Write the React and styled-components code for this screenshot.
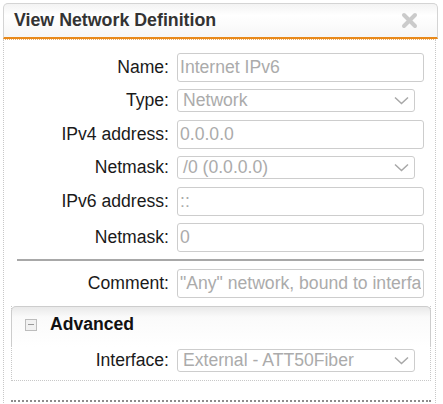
import React from 'react'
import styled, { createGlobalStyle } from 'styled-components'

const GlobalStyle = createGlobalStyle`
  body {
    margin: 0;
    background: #fff;
    font-family: "Liberation Sans", Arial, sans-serif;
  }
`

const Chevron = () => (
  <svg width="15" height="9" viewBox="0 0 15 9">
    <polyline points="1,1.5 7.5,7.5 14,1.5" fill="none" stroke="#a8a8a8" strokeWidth="1.5" />
  </svg>
)

const CloseIcon = () => (
  <svg width="17" height="17" viewBox="0 0 17 17">
    <g stroke="#cbcbcb" strokeWidth="4" strokeLinecap="round">
      <line x1="3" y1="3" x2="14" y2="14" />
      <line x1="14" y1="3" x2="3" y2="14" />
    </g>
  </svg>
)

const Row = ({ label, inset, children }) => (
  <FieldRow $labelWidth={inset ? 157 : 165}>
    <Label>{label}:</Label>
    {children}
  </FieldRow>
)

const Select = ({ value }) => (
  <SelectBox>
    <span>{value}</span>
    <Chevron />
  </SelectBox>
)

export default function App() {
  return (
    <>
      <GlobalStyle />
      <Dialog>
        <TitleBar>
          <Title>View Network Definition</Title>
          <CloseIcon />
        </TitleBar>
        <Body>
          <Row label="Name"><TextInput readOnly value="Internet IPv6" /></Row>
          <Row label="Type"><Select value="Network" /></Row>
          <Row label="IPv4 address"><TextInput readOnly value="0.0.0.0" /></Row>
          <Row label="Netmask"><Select value="/0 (0.0.0.0)" /></Row>
          <Row label="IPv6 address"><TextInput readOnly value="::" /></Row>
          <Row label="Netmask"><TextInput readOnly value="0" /></Row>
          <Separator />
          <Row label="Comment">
            <TextInput readOnly value={'"Any" network, bound to interface External - ATT50Fiber'} />
          </Row>
          <Fieldset>
            <Legend>
              <Toggle />
              <LegendTitle>Advanced</LegendTitle>
            </Legend>
            <Row label="Interface" inset><Select value="External - ATT50Fiber" /></Row>
          </Fieldset>
          <Footer />
        </Body>
      </Dialog>
    </>
  )
}

/* dialog frame */
const Dialog = styled.div`
  margin: 3px 0 0 3px;
  width: 435px;
`

const TitleBar = styled.div`
  box-sizing: border-box;
  height: 36px;
  display: flex;
  align-items: center;
  justify-content: space-between;
  padding: 0 19px 1px 10px;
  border: 1px solid #d4d4d4;
  border-bottom: 2px solid #e8891a;
  border-radius: 5px 5px 0 0;
  background: linear-gradient(#f3f3f3, #fff 35%, #f6f6f6);
`

const Title = styled.h1`
  margin: 0;
  font-size: 17.8px;
  font-weight: bold;
  color: #333;
`

const Body = styled.div`
  padding: 13px 0 5px;
  border-top: 1px dotted #eeb26c;
  border-left: 1px dotted #c8c8c8;
  border-right: 1px dotted #c8c8c8;
  margin-right: 2px;
`

/* form rows */
const FieldRow = styled.div`
  display: grid;
  grid-template-columns: ${p => p.$labelWidth}px auto;
  column-gap: 8px;
  align-items: center;
  margin-bottom: 7.4px;
`

const Label = styled.label`
  text-align: right;
  font-size: 17.6px;
  color: #1a1a1a;
  white-space: nowrap;
`

const TextInput = styled.input`
  box-sizing: border-box;
  width: 247px;
  height: 29px;
  padding: 0 2px;
  border: 1px solid #cdcdcd;
  border-radius: 3px;
  font-family: "Liberation Sans", Arial, sans-serif;
  font-size: 17.6px;
  color: #ababab;
  background: #fff;
  outline: none;
`

const SelectBox = styled.div`
  box-sizing: border-box;
  width: 238px;
  height: 23px;
  display: flex;
  align-items: center;
  justify-content: space-between;
  padding: 0 5px 0 5px;
  border: 1px solid #cdcdcd;
  border-radius: 3px;
  font-size: 17.6px;
  line-height: 21px;
  color: #ababab;
  white-space: nowrap;
`

const Separator = styled.hr`
  height: 2px;
  margin: 0 11px 8px 13px;
  border: none;
  background: #a8a8a8;
`

/* advanced section */
const Fieldset = styled.div`
  margin: 8px 4px 0 7px;
  border: 1px dotted #c8c8c8;
  border-top: none;
`

const Legend = styled.div`
  box-sizing: border-box;
  height: 41px;
  margin: 0 -1px 2px;
  display: flex;
  align-items: center;
  gap: 13px;
  padding: 0 0 5px 13px;
  border: 1px solid #cdcdcd;
  border-bottom: none;
  border-radius: 5px 5px 0 0;
  background: linear-gradient(#e9e9e9, #fafafa 10px, #fff);
`

const Toggle = styled.span`
  position: relative;
  box-sizing: border-box;
  width: 12px;
  height: 12px;
  border: 1px solid #bdbdbd;
  background: #f1f1f1;
  &::after {
    content: '';
    position: absolute;
    left: 2px;
    right: 2px;
    top: 4px;
    height: 1px;
    background: #999;
  }
`

const LegendTitle = styled.span`
  font-size: 17.6px;
  font-weight: bold;
  color: #111;
`

const Footer = styled.div`
  margin: 19px 4px 0 7px;
  border-top: 2px dotted #8c8c8c;
`
